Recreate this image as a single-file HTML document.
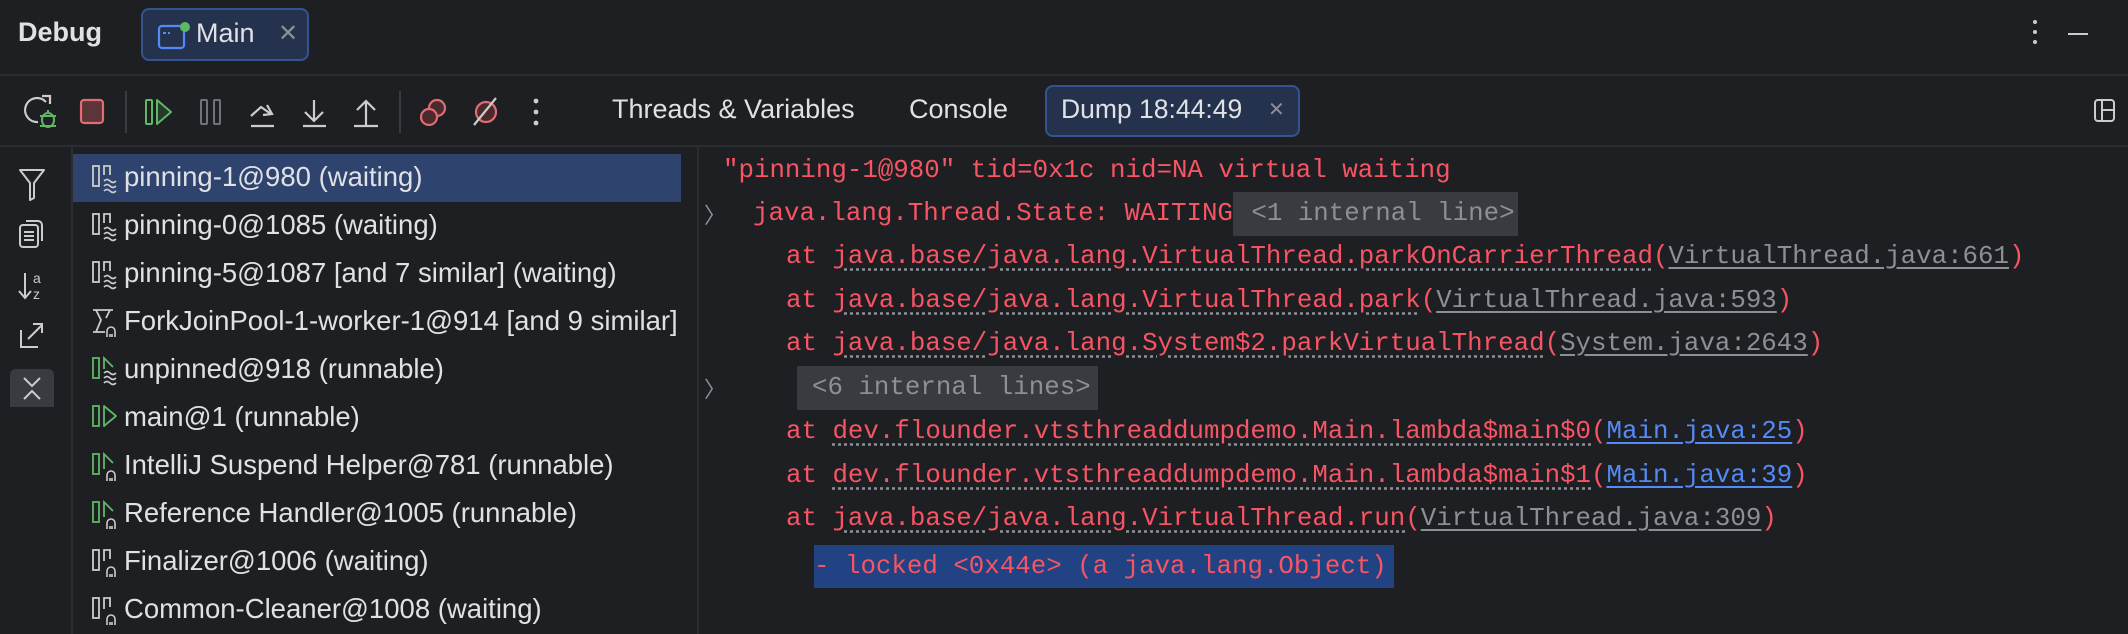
<!DOCTYPE html>
<html><head><meta charset="utf-8"><style>
*{margin:0;padding:0;box-sizing:border-box}
body{width:2128px;height:634px;background:#1e1f22;overflow:hidden;position:relative;font-family:"Liberation Sans",sans-serif;color:#dfe1e5}
.a{position:absolute}
.ui{font-size:27px;white-space:nowrap}
.row{position:absolute;left:73px;width:608px;height:48px}
.row span{position:absolute;left:51px;top:7px;font-size:27.5px;color:#dfe1e5;white-space:nowrap}
.row svg{position:absolute;left:18px;top:9px}
.code{position:absolute;font-family:"Liberation Mono",monospace;font-size:25.8px;color:#f75464;white-space:pre;line-height:44px;height:44px}
.g{color:#8c8f94;text-decoration:underline;text-underline-offset:4px}
.b{color:#548af7;text-decoration:underline;text-underline-offset:4px}
.d{text-decoration:underline dotted #8c8f94;text-underline-offset:5px}
.chev{position:absolute;left:704px;color:#8c8f94;font-size:22px}
</style></head><body>
<!-- header -->
<div class="a ui" style="left:18px;top:17px;font-weight:bold;font-size:27px">Debug</div>
<div class="a" style="left:141px;top:8px;width:168px;height:53px;background:#25324d;border:2px solid #35538f;border-radius:8px"></div>
<svg class="a" style="left:157px;top:20px" width="36" height="32"><rect x="2" y="6" width="25" height="22" rx="3" fill="none" stroke="#548af7" stroke-width="2.2"/><path d="M6 13h3M11 13h2" stroke="#548af7" stroke-width="2"/><circle cx="28" cy="7" r="5" fill="#5fb865"/></svg>
<div class="a ui" style="left:196px;top:18px;font-size:27px">Main</div>
<div class="a" style="left:278px;top:19px;color:#8c8f94;font-size:24px">✕</div>
<div class="a" style="left:2033px;top:20px;width:4px;height:4px;border-radius:2px;background:#ccc;box-shadow:0 10px #ccc,0 20px #ccc"></div>
<div class="a" style="left:2068px;top:33px;width:20px;height:2px;background:#ccc"></div>
<div class="a" style="left:0;top:74px;width:2128px;height:2px;background:#2b2d30"></div>
<!-- toolbar -->
<svg class="a" style="left:0;top:80px" width="560" height="64">
<path d="M46 22a12 12 0 1 0 -8 20" fill="none" stroke="#ccc" stroke-width="2.2"/><path d="M42 16h8v8" fill="none" stroke="#ccc" stroke-width="2.2"/>
<ellipse cx="48" cy="40" rx="6" ry="7" fill="none" stroke="#5fb865" stroke-width="2"/><path d="M40 36h16M40 46h16M48 32v-2" stroke="#5fb865" stroke-width="2"/>
<rect x="81" y="20" width="22" height="23" rx="3" fill="#5c3538" stroke="#e06c75" stroke-width="2.2"/>
<rect x="125" y="11" width="2" height="42" fill="#393b40"/>
<rect x="146" y="20" width="6" height="24" rx="1" fill="none" stroke="#5fb865" stroke-width="2"/><path d="M157 20l14 12l-14 12z" fill="#253a2a" stroke="#5fb865" stroke-width="2" stroke-linejoin="round"/>
<rect x="201" y="20" width="6" height="24" rx="1" fill="none" stroke="#6f737a" stroke-width="2"/><rect x="214" y="20" width="6" height="24" rx="1" fill="none" stroke="#6f737a" stroke-width="2"/>
<path d="M251 36l10-9l10 7M267 25l5 9l-9 1M251 46h23" fill="none" stroke="#ccc" stroke-width="2.2"/>
<path d="M314 20v20M305 32l9 9l9-9M303 46h23" fill="none" stroke="#ccc" stroke-width="2.2"/>
<path d="M366 46v-24M357 30l9-9l9 9M354 46h24" fill="none" stroke="#ccc" stroke-width="2.2"/>
<rect x="399" y="11" width="2" height="42" fill="#393b40"/>
<circle cx="437" cy="28" r="8" fill="#4a2a2d" stroke="#e06c75" stroke-width="2.2"/><circle cx="429" cy="37" r="8" fill="#4a2a2d" stroke="#e06c75" stroke-width="2.2"/>
<circle cx="486" cy="32" r="10" fill="#4a2a2d" stroke="#e06c75" stroke-width="2.2"/><path d="M474 45l22-27" stroke="#ccc" stroke-width="2.2"/>
<circle cx="536" cy="21" r="2.4" fill="#ccc"/><circle cx="536" cy="32" r="2.4" fill="#ccc"/><circle cx="536" cy="43" r="2.4" fill="#ccc"/>
</svg>
<div class="a ui" style="left:612px;top:94px">Threads &amp; Variables</div>
<div class="a ui" style="left:909px;top:94px">Console</div>
<div class="a" style="left:1045px;top:85px;width:255px;height:52px;background:#25324d;border:2px solid #35538f;border-radius:8px"></div>
<div class="a ui" style="left:1061px;top:94px;font-size:26.5px">Dump 18:44:49</div>
<div class="a" style="left:1268px;top:97px;color:#8c8f94;font-size:20px">✕</div>
<svg class="a" style="left:2093px;top:98px" width="24" height="26"><rect x="2" y="2" width="19" height="21" rx="3" fill="none" stroke="#ccc" stroke-width="2"/><path d="M9 2v21M9 12h12" stroke="#ccc" stroke-width="2"/></svg>
<div class="a" style="left:0;top:145px;width:2128px;height:2px;background:#2b2d30"></div>
<!-- left icon column -->
<div class="a" style="left:71px;top:147px;width:2px;height:487px;background:#2b2d30"></div>
<div class="a" style="left:697px;top:147px;width:2px;height:487px;background:#2b2d30"></div>
<svg class="a" style="left:0;top:147px" width="72" height="260">
<path d="M20 23h24l-10 13v15l-4 2v-17z" fill="none" stroke="#ccc" stroke-width="2" stroke-linejoin="round"/>
<rect x="20" y="78" width="18" height="22" rx="3" fill="none" stroke="#ccc" stroke-width="2"/><path d="M26 74h12a4 4 0 0 1 4 4v16M24 85h10M24 89h10M24 93h10" fill="none" stroke="#ccc" stroke-width="2"/>
<path d="M25 126v24M19 144l6 7l6-7" fill="none" stroke="#ccc" stroke-width="2"/><text x="33" y="136" font-size="14" fill="#ccc" font-family="Liberation Sans">a</text><text x="33" y="152" font-size="14" fill="#ccc" font-family="Liberation Sans">z</text>
<path d="M21 183v17h17M28 192l14-14M33 177h9v9" fill="none" stroke="#ccc" stroke-width="2"/>
<rect x="10" y="222" width="44" height="44" rx="6" fill="#393b40"/>
</svg>
<svg class="a" style="left:0;top:369px" width="72" height="44"><path d="M24 9l8 8l8-8M24 30l8-8l8 8" fill="none" stroke="#ccc" stroke-width="2"/></svg>
<!-- thread list -->
<div class="row" style="top:154px;background:#2e436e"></div>
<div class="row" style="top:154px"><svg width="34" height="32"><rect x="2" y="3" width="6" height="20" fill="none" stroke="#ccc" stroke-width="1.8"/><path d="M13 12v-9h6v9" fill="none" stroke="#ccc" stroke-width="1.8"/><path d="M13 18q3-3 6 0t6 0M13 23q3-3 6 0t6 0M13 28q3-3 6 0t6 0" fill="none" stroke="#ccc" stroke-width="1.6"/></svg><span>pinning-1@980 (waiting)</span></div>
<div class="row" style="top:202px"><svg width="34" height="32"><rect x="2" y="3" width="6" height="20" fill="none" stroke="#ccc" stroke-width="1.8"/><path d="M13 12v-9h6v9" fill="none" stroke="#ccc" stroke-width="1.8"/><path d="M13 18q3-3 6 0t6 0M13 23q3-3 6 0t6 0M13 28q3-3 6 0t6 0" fill="none" stroke="#ccc" stroke-width="1.6"/></svg><span>pinning-0@1085 (waiting)</span></div>
<div class="row" style="top:250px"><svg width="34" height="32"><rect x="2" y="3" width="6" height="20" fill="none" stroke="#ccc" stroke-width="1.8"/><path d="M13 12v-9h6v9" fill="none" stroke="#ccc" stroke-width="1.8"/><path d="M13 18q3-3 6 0t6 0M13 23q3-3 6 0t6 0M13 28q3-3 6 0t6 0" fill="none" stroke="#ccc" stroke-width="1.6"/></svg><span>pinning-5@1087 [and 7 similar] (waiting)</span></div>
<div class="row" style="top:298px"><svg width="34" height="32"><path d="M2 3h20M2 25h12M5 3l5 10l-5 12M19 3l-4 8" fill="none" stroke="#ccc" stroke-width="1.8"/><path d="M16 30v-6a4 4 0 0 1 8 0v6M19 27v3M21 27v3" fill="none" stroke="#ccc" stroke-width="1.6"/></svg><span>ForkJoinPool-1-worker-1@914 [and 9 similar]</span></div>
<div class="row" style="top:346px"><svg width="34" height="32"><rect x="2" y="3" width="6" height="20" fill="none" stroke="#5fb865" stroke-width="1.8"/><path d="M13 14v-11l9 9" fill="none" stroke="#5fb865" stroke-width="1.8"/><path d="M13 18q3-3 6 0t6 0M13 23q3-3 6 0t6 0M13 28q3-3 6 0t6 0" fill="none" stroke="#ccc" stroke-width="1.6"/></svg><span>unpinned@918 (runnable)</span></div>
<div class="row" style="top:394px"><svg width="34" height="32"><rect x="2" y="3" width="6" height="20" fill="none" stroke="#5fb865" stroke-width="1.8"/><path d="M13 3l12 10l-12 10z" fill="none" stroke="#5fb865" stroke-width="1.8" stroke-linejoin="round"/></svg><span>main@1 (runnable)</span></div>
<div class="row" style="top:442px"><svg width="34" height="32"><rect x="2" y="3" width="6" height="20" fill="none" stroke="#5fb865" stroke-width="1.8"/><path d="M13 18v-15l9 9" fill="none" stroke="#5fb865" stroke-width="1.8"/><path d="M16 30v-6a4 4 0 0 1 8 0v6M19 27v3M21 27v3" fill="none" stroke="#ccc" stroke-width="1.6"/></svg><span>IntelliJ Suspend Helper@781 (runnable)</span></div>
<div class="row" style="top:490px"><svg width="34" height="32"><rect x="2" y="3" width="6" height="20" fill="none" stroke="#5fb865" stroke-width="1.8"/><path d="M13 18v-15l9 9" fill="none" stroke="#5fb865" stroke-width="1.8"/><path d="M16 30v-6a4 4 0 0 1 8 0v6M19 27v3M21 27v3" fill="none" stroke="#ccc" stroke-width="1.6"/></svg><span>Reference Handler@1005 (runnable)</span></div>
<div class="row" style="top:538px"><svg width="34" height="32"><rect x="2" y="3" width="6" height="20" fill="none" stroke="#ccc" stroke-width="1.8"/><path d="M13 14v-11h6v9" fill="none" stroke="#ccc" stroke-width="1.8"/><path d="M16 30v-6a4 4 0 0 1 8 0v6M19 27v3M21 27v3" fill="none" stroke="#ccc" stroke-width="1.6"/></svg><span>Finalizer@1006 (waiting)</span></div>
<div class="row" style="top:586px"><svg width="34" height="32"><rect x="2" y="3" width="6" height="20" fill="none" stroke="#ccc" stroke-width="1.8"/><path d="M13 14v-11h6v9" fill="none" stroke="#ccc" stroke-width="1.8"/><path d="M16 30v-6a4 4 0 0 1 8 0v6M19 27v3M21 27v3" fill="none" stroke="#ccc" stroke-width="1.6"/></svg><span>Common-Cleaner@1008 (waiting)</span></div>
<!-- code -->
<div class="code" style="left:723px;top:149px">"pinning-1@980" tid=0x1c nid=NA virtual waiting</div>
<div class="chev" style="top:198px">〉</div>
<div class="code" style="left:753px;top:192px">java.lang.Thread.State: WAITING<span style="background:#393b40;color:#8c8f94;display:inline-block;height:44px;padding:0 3px"> &lt;1 internal line&gt;</span></div>
<div class="code" style="left:786px;top:235px">at <span class="d">java.base/java.lang.VirtualThread.parkOnCarrierThread</span>(<span class="g">VirtualThread.java:661</span>)</div>
<div class="code" style="left:786px;top:279px">at <span class="d">java.base/java.lang.VirtualThread.park</span>(<span class="g">VirtualThread.java:593</span>)</div>
<div class="code" style="left:786px;top:322px">at <span class="d">java.base/java.lang.System$2.parkVirtualThread</span>(<span class="g">System.java:2643</span>)</div>
<div class="chev" style="top:372px">〉</div>
<div class="code" style="left:797px;top:366px;background:#393b40;color:#8c8f94;width:301px;padding-left:15px">&lt;6 internal lines&gt;</div>
<div class="code" style="left:786px;top:410px">at <span class="d">dev.flounder.vtsthreaddumpdemo.Main.lambda$main$0</span>(<span class="b">Main.java:25</span>)</div>
<div class="code" style="left:786px;top:454px">at <span class="d">dev.flounder.vtsthreaddumpdemo.Main.lambda$main$1</span>(<span class="b">Main.java:39</span>)</div>
<div class="code" style="left:786px;top:497px">at <span class="d">java.base/java.lang.VirtualThread.run</span>(<span class="g">VirtualThread.java:309</span>)</div>
<div class="code" style="left:814px;top:545px;background:#214283;width:580px;height:43px;line-height:43px">- locked &lt;0x44e&gt; (a java.lang.Object)</div>
</body></html>
